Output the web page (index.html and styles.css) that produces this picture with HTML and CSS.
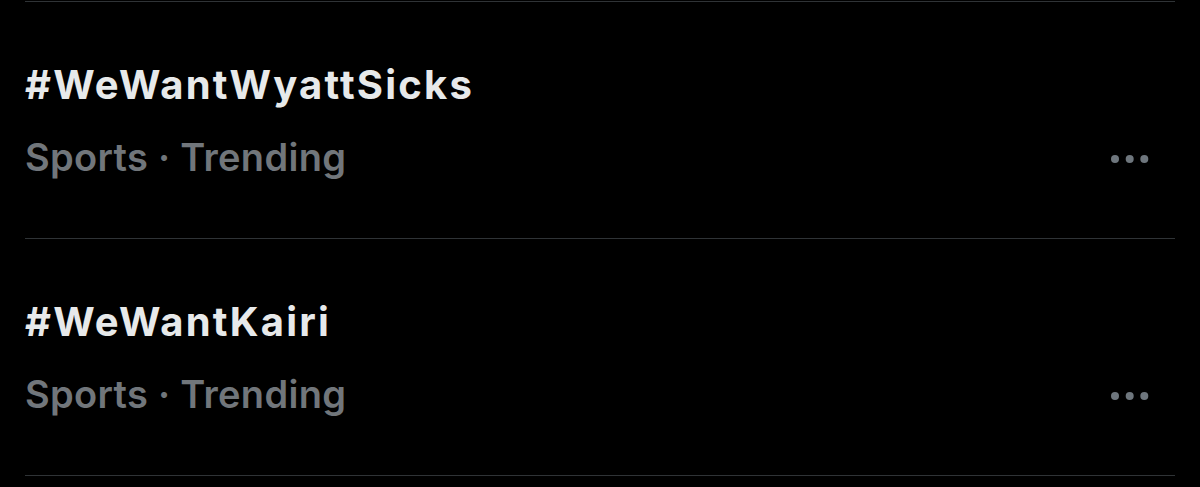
FILE: index.html
```html
<!DOCTYPE html>
<html lang="en">
<head>
<meta charset="utf-8">
<title>Trends</title>
<link rel="stylesheet" href="styles.css">
</head>
<body>
<div class="list">
  <div class="trend">
    <div class="title">#WeWantWyattSicks</div>
    <div class="meta">
      <span class="sub">Sports · Trending</span>
      <svg class="more" width="38" height="10" viewBox="0 0 38 10" aria-hidden="true">
        <circle cx="4" cy="5" r="4"/>
        <circle cx="18.7" cy="5" r="4"/>
        <circle cx="33.3" cy="5" r="4"/>
      </svg>
    </div>
  </div>
  <div class="trend">
    <div class="title">#WeWantKairi</div>
    <div class="meta">
      <span class="sub">Sports · Trending</span>
      <svg class="more" width="38" height="10" viewBox="0 0 38 10" aria-hidden="true">
        <circle cx="4" cy="5" r="4"/>
        <circle cx="18.7" cy="5" r="4"/>
        <circle cx="33.3" cy="5" r="4"/>
      </svg>
    </div>
  </div>
</div>
</body>
</html>
```
FILE: styles.css
```css
html, body {
  margin: 0;
  padding: 0;
  background: #000;
  height: 100%;
  overflow: hidden;
}
body {
  font-family: Inter, "Liberation Sans", sans-serif;
}
.list {
  margin: 1px 25px 0 25px;
  border-top: 1px solid #2f3336;
}
.trend {
  padding: 59px 0 57px 0;
  border-bottom: 1px solid #2f3336;
}
.title {
  color: #e7e9ea;
  font-size: 40px;
  font-weight: 700;
  letter-spacing: 2.2px;
  line-height: 48px;
}
.meta {
  margin-top: 24px;
  display: flex;
  align-items: center;
  justify-content: space-between;
  height: 48px;
}
.sub {
  color: #71767b;
  font-size: 38px;
  font-weight: 600;
  letter-spacing: 0.3px;
  line-height: 48px;
}
.more {
  fill: #6e767d;
  margin-right: 26px;
  margin-top: 3px;
}
```
